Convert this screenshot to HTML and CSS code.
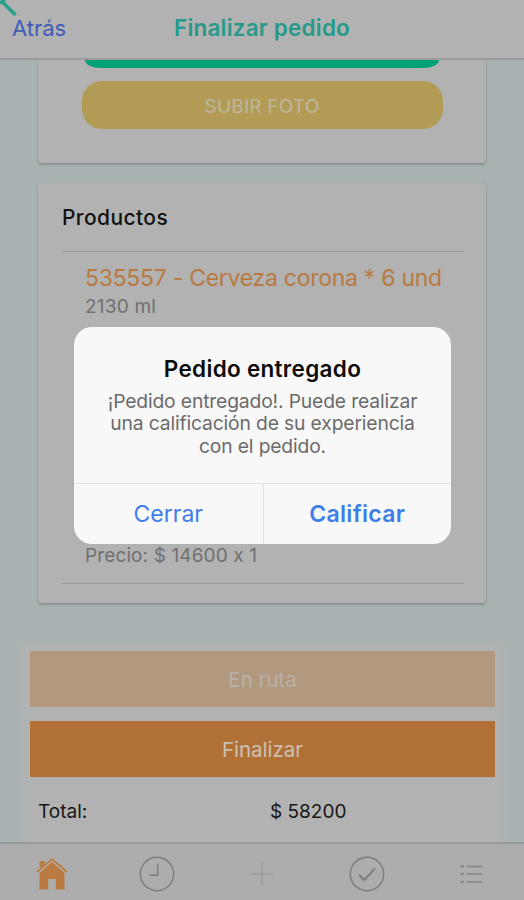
FILE: index.html
```html
<!DOCTYPE html>
<html lang="es">
<head>
<meta charset="utf-8">
<title>Finalizar pedido</title>
<link rel="stylesheet" href="styles.css">
</head>
<body>
<div class="app">
  <header class="navbar">
    <svg class="back-icon" width="18" height="18" viewBox="0 0 18 18"><path d="M5 -1L0 3.500M1.500 1L15.500 15" fill="none" stroke="#27a08c" stroke-width="3.600"/></svg>
    <a class="back">Atrás</a>
    <h1 class="title">Finalizar pedido</h1>
    <span></span>
  </header>
  <main class="content">
    <section class="card photo-card">
      <div class="pill pill-green"></div>
      <button class="pill pill-yellow"><span>SUBIR FOTO</span></button>
    </section>
    <section class="card products">
      <h2 class="card-title"><span>Productos</span></h2>
      <div class="product">
        <div class="name"><span>535557 - Cerveza corona * 6 und</span></div>
        <div class="detail size"><span>2130 ml</span></div>
        <div class="detail price"><span>Precio: $ 14600 x 1</span></div>
      </div>
    </section>
    <section class="summary">
      <button class="action disabled"><span>En ruta</span></button>
      <button class="action"><span>Finalizar</span></button>
      <div class="total"><span>Total:</span><span>$ 58200</span></div>
    </section>
  </main>
  <nav class="tabbar">
    <svg width="36" height="36" viewBox="0 0 36 36"><path d="M5.500 16.500L18 5.700L30.500 16.500V33.500H21.800V23H14.200V33.500H5.500Z" fill="#ba7a40"/><path d="M5.500 12V5H10.500V8" fill="#ba7a40"/><path d="M3.300 17.500L18 4.500L32.700 17.500" fill="none" stroke="#b8ada3" stroke-width="2"/><path d="M3 16L18 3L33 16" fill="none" stroke="#ba7a40" stroke-width="1.700"/></svg>
    <svg width="36" height="36" viewBox="0 0 36 36" fill="none" stroke="#7c7c7c" stroke-width="1.400"><circle cx="18" cy="18" r="16.700"/><path d="M18.700 7.500V19.300H10.500"/></svg>
    <svg width="36" height="36" viewBox="0 0 36 36" fill="none" stroke="#9c9c9c" stroke-width="1.500"><path d="M18 7V29M7 18H29"/></svg>
    <svg width="36" height="36" viewBox="0 0 36 36" fill="none" stroke="#7c7c7c" stroke-width="1.400"><circle cx="18" cy="18" r="16.700"/><path d="M10 18.700L15.300 24L26 12.300" stroke-width="2"/></svg>
    <svg width="36" height="36" viewBox="0 0 36 36" fill="none" stroke="#858585" stroke-width="1.500"><path d="M12.500 10.500H28M12.500 18H28M12.500 26H28"/><path d="M6.700 10.500H9.700M6.700 18H9.700M6.700 26H9.700" stroke-width="2.500"/></svg>
  </nav>
</div>
<div class="alert" role="alertdialog">
  <div class="alert-body">
    <h3 class="alert-title"><span>Pedido entregado</span></h3>
    <p class="message"><span>¡Pedido entregado!. Puede realizar</span><br><span>una calificación de su experiencia</span><br><span>con el pedido.</span></p>
  </div>
  <div class="alert-actions">
    <button><span>Cerrar</span></button>
    <button class="primary"><span>Calificar</span></button>
  </div>
</div>
</body>
</html>
```

FILE: styles.css
```css
* { box-sizing: border-box; }
body { margin: 0; font-family: Inter, "Liberation Sans", sans-serif; font-feature-settings: "calt" 0; background: #a9b2b2; }
h1, h2, h3, p { margin: 0; }
button { border: 0; padding: 0; background: none; font: inherit; font-feature-settings: inherit; }
.app { height: 900px; display: flex; flex-direction: column; overflow: hidden; }
.navbar { position: relative; flex: none; height: 60px; padding: 0 12px 2px; display: grid; grid-template-columns: 1fr auto 1fr; align-items: center; background: #b2b2b2; border-bottom: 2px solid #9b9d9d; }
.back-icon { position: absolute; left: 0; top: 0; }
.back { color: #405cb8; font-size: 22px; }
.title { color: #27998a; font-size: 22.5px; letter-spacing: 0.2px; font-weight: 600; line-height: 56px; }
.content { flex: 1; min-height: 0; display: flex; flex-direction: column; }
.card { flex: none; margin: 0 38px; background: #b2b2b2; border-radius: 4px; box-shadow: 0 2px 2px #8d9292, 0 0 2px #969b9b; }
.photo-card { height: 103px; clip-path: inset(0 -4px -6px -4px); border-radius: 0 0 4px 4px; }
.pill { display: block; height: 48px; border-radius: 20px; margin: 0 auto; }
.pill-green { width: 354px; height: 8px; border-radius: 0 0 16px 16px / 0 0 8px 8px; background: #00a078; }
.pill-yellow { width: 361px; margin-top: 13px; background: #b29c55; color: #bfb6a0; font-size: 19px; letter-spacing: 0.2px; }
.pill-yellow span { position: relative; top: 1px; }
.products { height: 420px; margin-top: 20px; padding: 1px 22px 0 24px; }
.card-title { height: 68px; line-height: 68px; font-size: 21px; letter-spacing: 0.4px; font-weight: 500; color: #111; border-bottom: 1px solid #9c9c9c; }
.product { height: 332px; padding: 9px 22px 0 23px; border-bottom: 1px solid #9c9c9c; display: flex; flex-direction: column; }
.name { color: #b97a42; font-size: 23px; letter-spacing: -0.28px; line-height: 34px; white-space: nowrap; }
.detail { color: #707070; font-size: 19px; line-height: 24px; }
.size { letter-spacing: 0.2px; }
.price { margin-top: auto; margin-bottom: 15px; letter-spacing: 0.12px; }
.summary { margin: 34px 15px 0 16px; padding: 14px 14px 0; flex: 1; background: linear-gradient(#a9b2b2, #a9b2b200 14px), linear-gradient(90deg, #a9b2b2, #b2b2b2 12px, #b2b2b2 calc(100% - 12px), #a9b2b2); display: flex; flex-direction: column; }
.action { flex: none; height: 56px; margin-bottom: 14px; background: #b17136; color: #ccc0b5; font-size: 20.5px; }
.action.disabled { background: #b2987f; color: #b9b0a8; }
.total { display: grid; grid-template-columns: 232px 1fr; padding: 7px 8px 0; color: #161616; font-size: 19px; line-height: 28px; }
.tabbar { flex: none; height: 58px; display: flex; justify-content: space-around; padding-top: 12px; background: #adadad; border-top: 2px solid #979b9b; }
.alert { position: absolute; left: 74px; top: 327px; width: 377px; height: 217px; display: flex; flex-direction: column; border-radius: 18px; background: #f8f8f8; text-align: center; overflow: hidden; }
.alert-body { height: 156px; padding-top: 26px; }
.alert-title { font-size: 22.5px; letter-spacing: 0.3px; line-height: 32px; font-weight: 600; color: #0c0c0c; }
.message { margin-top: 5px; font-size: 19.3px; letter-spacing: -0.15px; line-height: 22.3px; color: #6b6b6b; }
.alert-actions { flex: 1; display: grid; grid-template-columns: 1fr 1fr; border-top: 1px solid #e2e2e2; }
.alert-actions button { font-size: 23px; color: #3f7ee8; }
.alert-actions .primary { font-weight: 600; letter-spacing: 0.3px; border-left: 1px solid #e2e2e2; }
```
